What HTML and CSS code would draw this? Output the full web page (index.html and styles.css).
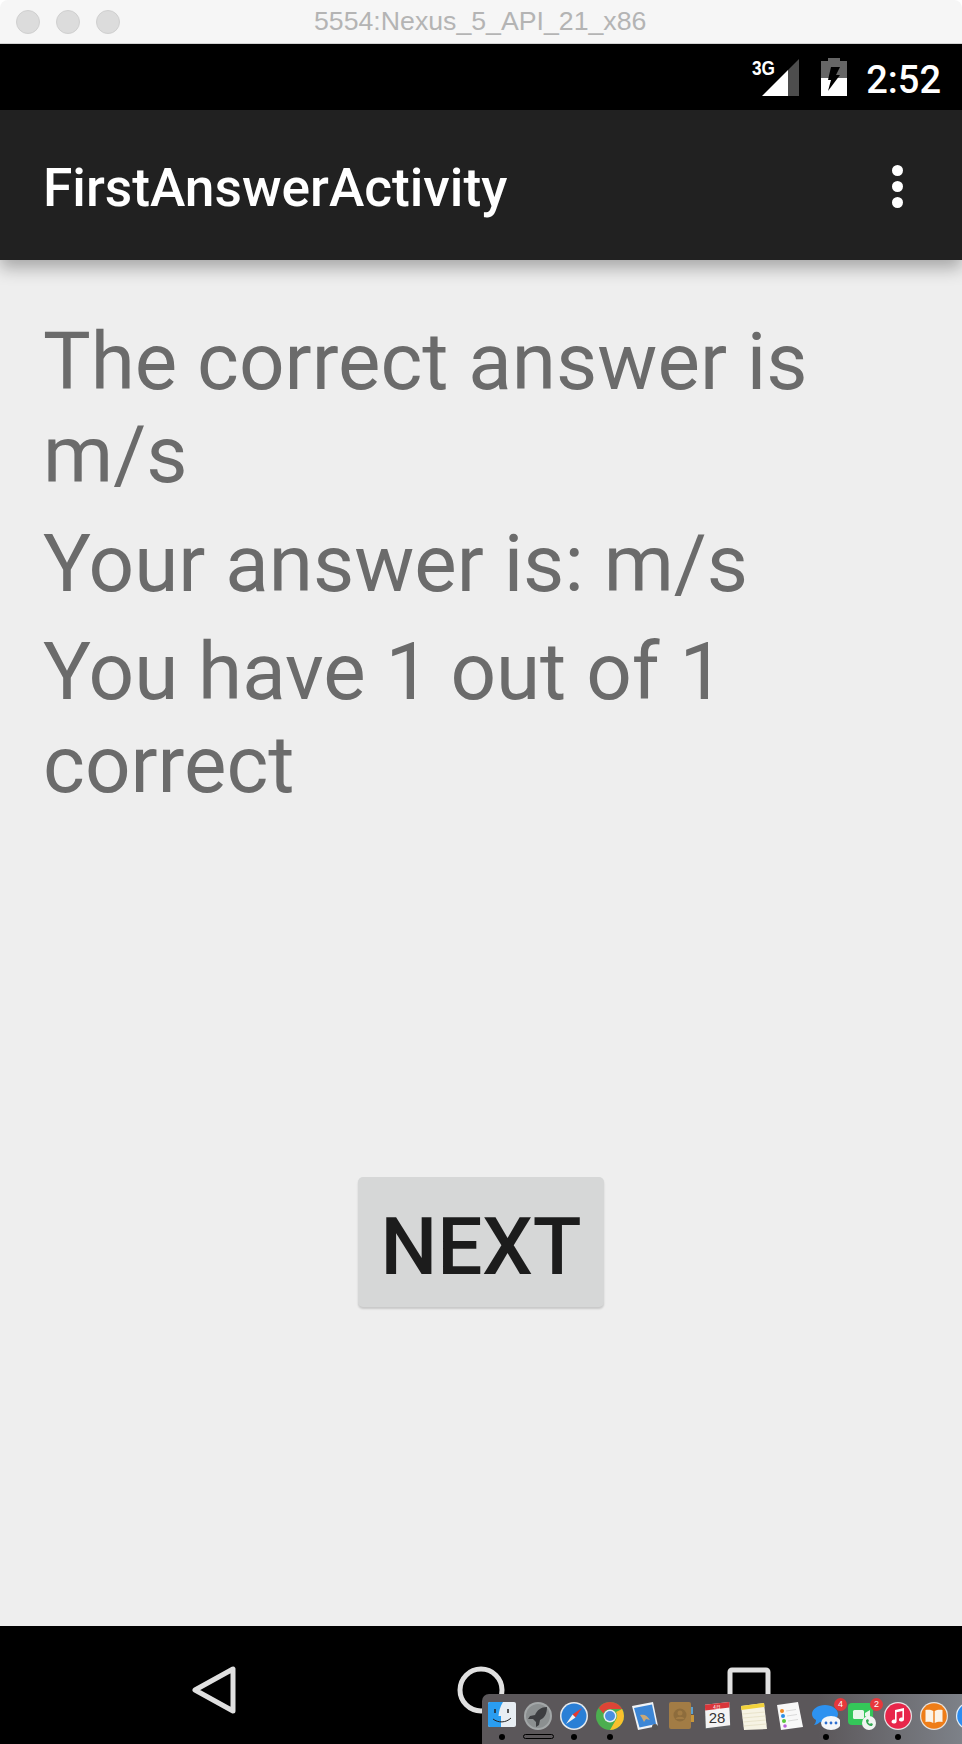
FILE: index.html
```html
<!DOCTYPE html>
<html lang="en">
<head>
    <meta charset="UTF-8">
    <meta name="viewport" content="width=device-width, initial-scale=1.0">
    <title>FirstAnswerActivity</title>
    <link rel="stylesheet" href="styles.css">
</head>
<body>
    <div class="window">
        <div class="titlebar">
            <div class="lights"><span></span><span></span><span></span></div>
            <div class="window-title">5554:Nexus_5_API_21_x86</div>
        </div>

        <div class="statusbar">
            <svg class="signal" width="47" height="46" viewBox="0 -8 47 46">
                <polygon points="10,37 36,37 36,11" fill="#fff"/>
                <polygon points="36,37 47,37 47,0 36,11" fill="#4d4d4d"/>
                <text class="net-type" x="0" y="16" textLength="23" lengthAdjust="spacingAndGlyphs">3G</text>
            </svg>
            <svg class="battery" width="26" height="38" viewBox="0 0 26 38">
                <path d="M7 0h12v3h7v17H0V3h7z" fill="#666"/>
                <rect x="0" y="20" width="26" height="18" fill="#fff"/>
                <polygon points="10,9 19,9 15,17 19,17 7,33 10,22 7,22" fill="#000"/>
            </svg>
            <span class="clock">2:52</span>
        </div>

        <nav class="appbar">
            <div class="appbar-title">FirstAnswerActivity</div>
            <div class="kebab"><span></span><span></span><span></span></div>
        </nav>

        <main class="content">
            <p class="line">The correct answer is m/s</p>
            <p class="line">Your answer is: m/s</p>
            <p class="line">You have 1 out of 1 correct</p>
            <button class="next-btn">NEXT</button>
        </main>

        <div class="navbar">
            <svg width="50" height="52" viewBox="0 0 50 52"><polygon points="7,26 45,5 45,47" fill="none" stroke="#e0e0e0" stroke-width="5" stroke-linejoin="round"/></svg>
            <svg width="50" height="52" viewBox="0 0 50 52"><circle cx="25" cy="26" r="21" fill="none" stroke="#e0e0e0" stroke-width="5"/></svg>
            <svg width="50" height="52" viewBox="0 0 50 52"><rect x="6" y="6" width="38" height="39" rx="2" fill="none" stroke="#e0e0e0" stroke-width="5"/></svg>
        </div>

        <div class="dock">
            <div class="dock-item">
                <svg viewBox="0 0 28 28"><rect width="28" height="25" rx="2" fill="#e8eef3"/><path d="M0 2a2 2 0 0 1 2-2h13c-3 5-4 9-4.500 14H13v11H2a2 2 0 0 1-2-2z" fill="#2a9df0"/><path d="M7 7v4M20 7v4" stroke="#222" stroke-width="1.500"/><path d="M5 17c5 4 13 4 18-1" fill="none" stroke="#222" stroke-width="1"/></svg>
                <i class="dot"></i>
            </div>
            <div class="dock-item">
                <svg viewBox="0 0 28 28"><circle cx="14" cy="14" r="14" fill="#a3a7a8"/><circle cx="14" cy="14" r="12" fill="#8b8f90"/><path d="M23 5c-6 0-10 3-12 8l-5 1-2 3 5 0 3 3 0 5 3-2 1-5c5-2 7-7 7-13z" fill="#3c3d40"/></svg>
                <i class="launch-bar"></i>
            </div>
            <div class="dock-item">
                <svg viewBox="0 0 28 28"><circle cx="14" cy="14" r="14" fill="#e8eaec"/><circle cx="14" cy="14" r="12.500" fill="#2a7fd6"/><polygon points="22,6 12.500,12.500 15.500,15.500" fill="#e8392f"/><polygon points="6,22 12.500,12.500 15.500,15.500" fill="#f2f2f2"/></svg>
                <i class="dot"></i>
            </div>
            <div class="dock-item">
                <svg viewBox="0 0 28 28"><circle cx="14" cy="14" r="14" fill="#4cae4f"/><path d="M14 0a14 14 0 0 1 12.100 7H14a7 7 0 0 0-6.500 4.500L2.700 6A14 14 0 0 1 14 0z" fill="#dc4437"/><path d="M26.100 7A14 14 0 0 1 14 28l6-10.500A7 7 0 0 0 20 10z" fill="#fbc02d"/><circle cx="14" cy="14" r="6.500" fill="#e8eef5"/><circle cx="14" cy="14" r="5" fill="#4a8fe0"/></svg>
                <i class="dot"></i>
            </div>
            <div class="dock-item">
                <svg viewBox="0 0 28 28"><polygon points="0,4 21,0 26,24 6,28" fill="#f0f3f6"/><polygon points="2,6 20,2.500 24,22 7.500,25.500" fill="#3c86d6"/><path d="M8 13c4-1 7 0 10 5l-4-1-2 3-2-4z" fill="#c9a877"/><circle cx="23" cy="25" r="3" fill="#555"/></svg>
            </div>
            <div class="dock-item">
                <svg viewBox="0 0 28 28"><rect x="1" y="0" width="22" height="27" rx="2" fill="#a27c45"/><rect x="23" y="5" width="2" height="7" fill="#5aa0d0"/><rect x="23" y="13" width="3" height="7" fill="#c8963a"/><circle cx="12" cy="13" r="6.500" fill="#8d6c3c"/><circle cx="12" cy="11" r="2.500" fill="#a27c45"/><path d="M7.500 17c1-3 8-3 9 0" fill="#a27c45"/></svg>
            </div>
            <div class="dock-item">
                <svg viewBox="0 0 30 30"><rect x="1" y="3" width="27" height="26" fill="#5e6063"/><polygon points="1,3 27,0 28,25 2,28" fill="#f4f4f4"/><polygon points="1,3 27,0 27.300,6 1.200,9" fill="#d9363a"/><text class="cal-month" x="10" y="7">4月</text><text class="cal-day" x="5" y="23">28</text></svg>
            </div>
            <div class="dock-item">
                <svg viewBox="0 0 28 28"><polygon points="1,4 24,1 27,27 4,28" fill="#f6f3e4"/><polygon points="1,4 24,1 24.500,5 1.400,8" fill="#f2d23c"/><path d="M2 12l23-2M2.500 16l23-2M3 20l23-2M3.500 24l23-2" stroke="#e2dcc0" stroke-width=".7"/></svg>
            </div>
            <div class="dock-item">
                <svg viewBox="0 0 28 28"><polygon points="1,3 22,0 27,25 5,28" fill="#f8f8f8"/><circle cx="6" cy="9" r="2" fill="#f08a24"/><circle cx="7" cy="14" r="2" fill="#2c8fe8"/><circle cx="8" cy="19" r="2" fill="#5ac83c"/><circle cx="9" cy="24" r="1.800" fill="#b95fd8"/><path d="M10 9l10-1.500M11 14l10-1.500M12 19l10-1.500" stroke="#ccc" stroke-width=".7"/></svg>
            </div>
            <div class="dock-item">
                <svg viewBox="0 0 28 28"><path d="M13 3c7 0 13 4 13 9s-6 9-13 9c-2 0-3 0-5-1-2 2-4 3-6 3 1-1 2-3 2-5-3-1.500-4-4-4-6 0-5 6-9 13-9z" fill="#2d92f0"/><ellipse cx="19" cy="21" rx="10" ry="7" fill="#f4f6f8"/><circle cx="14" cy="21" r="1.400" fill="#2d6fd0"/><circle cx="19" cy="21" r="1.400" fill="#2d6fd0"/><circle cx="24" cy="21" r="1.400" fill="#2d6fd0"/></svg>
                <span class="badge">4</span>
                <i class="dot"></i>
            </div>
            <div class="dock-item">
                <svg viewBox="0 0 28 28"><rect x="0" y="1" width="25" height="22" rx="4" fill="#34c759"/><rect x="5" y="8" width="11" height="9" rx="1.500" fill="#e9f7ea"/><polygon points="17,11 22,8 22,17 17,14" fill="#e9f7ea"/><circle cx="21" cy="21" r="7" fill="#f2f4f2"/><path d="M18 18c0 4 3 6 6 6l1-2-2-1-1 1c-1-.5-1.500-1-2-2l1-1-1-2z" fill="#34a853"/></svg>
                <span class="badge">2</span>
            </div>
            <div class="dock-item">
                <svg viewBox="0 0 28 28"><circle cx="14" cy="14" r="14" fill="#e9e4e6"/><circle cx="14" cy="14" r="12.800" fill="#e8264a"/><path d="M11 8l9-2v11.500a2.500 2 0 1 1-1.600-1.900V9l-5.800 1.300v9.200a2.500 2 0 1 1-1.600-1.900z" fill="#fff"/></svg>
                <i class="dot"></i>
            </div>
            <div class="dock-item">
                <svg viewBox="0 0 28 28"><circle cx="14" cy="14" r="14" fill="#e9e4e0"/><circle cx="14" cy="14" r="12.800" fill="#ee7d18"/><path d="M13.300 9C11 7.500 8 7.500 5.500 8v12c2.500-.5 5.500-.5 7.800 1zM14.700 9c2.300-1.500 5.300-1.500 7.800-1v12c-2.500-.5-5.500-.5-7.800 1z" fill="#fbf3e8"/></svg>
            </div>
            <div class="dock-item">
                <svg viewBox="0 0 28 28"><circle cx="14" cy="14" r="14" fill="#e4eef8"/><circle cx="14" cy="14" r="12.800" fill="#2b8cf0"/></svg>
            </div>
        </div>
    </div>
</body>
</html>
```

FILE: styles.css
```css
html, body {
    margin: 0;
    padding: 0;
    background-color: #fff;
}
.window {
    position: relative;
    width: 962px;
    height: 1744px;
    display: flex;
    flex-direction: column;
    overflow: hidden;
    font-family: Roboto, "Liberation Sans", sans-serif;
}
.titlebar {
    height: 44px;
    flex: none;
    display: flex;
    align-items: center;
    box-sizing: border-box;
    background-color: #f6f6f6;
    border-bottom: 1px solid #d2d2d2;
    border-radius: 8px 8px 0 0;
}
.lights {
    display: flex;
    gap: 16px;
    margin-left: 16px;
}
.lights span {
    width: 24px;
    height: 24px;
    box-sizing: border-box;
    border-radius: 50%;
    background-color: #dcdcdc;
    border: 1px solid #d0d0d0;
}
.window-title {
    margin-left: 194px;
    font-family: "Liberation Sans", Arial, sans-serif;
    font-size: 26.7px;
    color: #b4b4b4;
}
.statusbar {
    height: 66px;
    flex: none;
    display: flex;
    justify-content: flex-end;
    align-items: flex-start;
    background-color: #000;
    padding-right: 21px;
}
.signal {
    margin-top: 7px;
}
.net-type {
    font-family: "Liberation Sans", Arial, sans-serif;
    font-size: 21px;
    font-weight: bold;
    fill: #fff;
}
.battery {
    margin: 14px 0 0 22px;
}
.clock {
    margin: 9px 0 0 19px;
    font-size: 38px;
    line-height: 54px;
    font-weight: 500;
    color: #fff;
}
.appbar {
    height: 150px;
    flex: none;
    box-sizing: border-box;
    position: relative;
    z-index: 1;
    display: flex;
    justify-content: space-between;
    align-items: center;
    padding: 6px 59px 0 43px;
    background-color: #212121;
    box-shadow: 0 8px 16px rgba(0, 0, 0, 0.3);
}
.appbar-title {
    font-size: 53.3px;
    font-weight: 500;
    color: #fff;
}
.kebab {
    display: flex;
    flex-direction: column;
    gap: 5px;
    margin-bottom: 4px;
}
.kebab span {
    width: 11px;
    height: 11px;
    border-radius: 50%;
    background-color: #fff;
}
.content {
    flex: 1;
    display: flex;
    flex-direction: column;
    padding: 56px 43px 0;
    background-color: #eee;
}
.line {
    margin: 0 0 15.5px;
    max-width: 800px;
    font-size: 80px;
    line-height: 93px;
    color: #6b6b6b;
}
.next-btn {
    align-self: center;
    margin-top: 349.5px;
    width: 246px;
    height: 130px;
    padding: 10px 0 0;
    border: none;
    border-radius: 5px;
    background-color: #d6d7d7;
    box-shadow: 0 2px 2px rgba(0, 0, 0, 0.16);
    font-family: Roboto, sans-serif;
    font-size: 80px;
    font-weight: 500;
    color: #1c1c1c;
}
.navbar {
    height: 118px;
    flex: none;
    box-sizing: border-box;
    display: flex;
    justify-content: center;
    align-items: center;
    gap: 218px;
    padding-top: 10px;
    background-color: #000;
}
.dock {
    position: absolute;
    left: 482px;
    right: 0;
    bottom: 0;
    height: 50px;
    display: flex;
    gap: 8px;
    box-sizing: border-box;
    padding: 8px 0 0 6px;
    overflow: hidden;
    background: linear-gradient(90deg, #5b575a 0%, #5b575a 70%, #7d8188 100%);
    border-radius: 7px 0 0 0;
}
.dock-item {
    position: relative;
    flex: none;
    width: 28px;
    display: flex;
    flex-direction: column;
    align-items: center;
}
.dock-item svg {
    width: 28px;
    height: 28px;
    flex: none;
}
.dot {
    width: 6px;
    height: 6px;
    margin-top: 4px;
    border-radius: 50%;
    background-color: #000;
}
.launch-bar {
    width: 29px;
    height: 3px;
    margin-top: 4px;
    flex: none;
    border: 1px solid #000;
    border-radius: 3px;
}
.badge {
    position: absolute;
    top: -4px;
    right: -7px;
    width: 13px;
    height: 13px;
    border-radius: 50%;
    background-color: #e8383c;
    color: #fff;
    font-family: "Liberation Sans", Arial, sans-serif;
    font-size: 9px;
    line-height: 13px;
    text-align: center;
}
.cal-month {
    font-family: "Noto Sans CJK SC", sans-serif;
    font-size: 5px;
    fill: #fff;
}
.cal-day {
    font-family: "Liberation Sans", Arial, sans-serif;
    font-size: 16px;
    fill: #333;
}
```
